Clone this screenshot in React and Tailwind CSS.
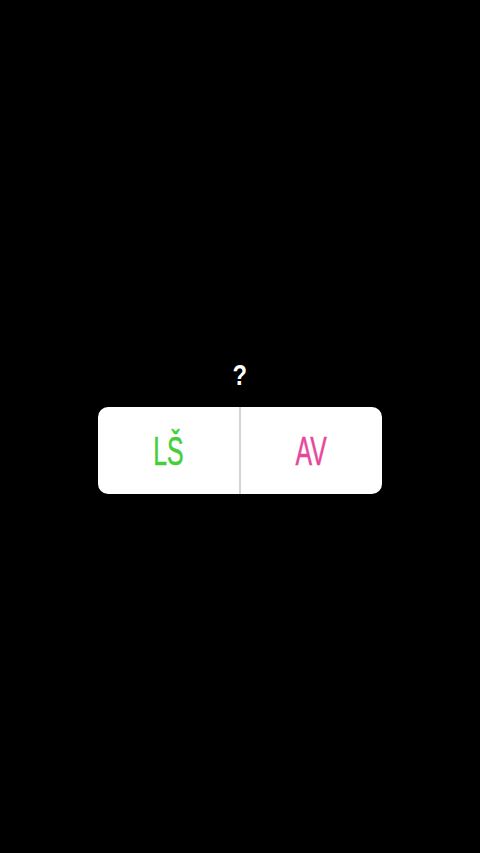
import React from 'react';

const Option = ({ label, color }) => (
  <div className="flex-1 flex items-center justify-center">
    <span
      className={`inline-block scale-x-[0.62] text-[40px] leading-none font-normal [-webkit-text-stroke:0.5px_currentColor] ${color}`}
      style={{ fontFamily: '"Liberation Sans", Arial, sans-serif' }}
    >
      {label}
    </span>
  </div>
);

export default function App() {
  return (
    <div className="w-full h-[853px] bg-black flex flex-col items-center pt-[360px]">
      <div
        className="text-white text-[29px] font-bold leading-[30px] scale-x-[0.82] h-[30px]"
        style={{ fontFamily: '"Liberation Sans", Arial, sans-serif' }}
      >
        ?
      </div>
      <div className="mt-[17px] w-[284px] h-[87px] rounded-[10px] bg-white flex overflow-hidden">
        <Option label="LŠ" color="text-[#43cf3b]" />
        <div className="w-[2px] bg-[#d4d4d4]" />
        <Option label="AV" color="text-[#e8489b]" />
      </div>
    </div>
  );
}
